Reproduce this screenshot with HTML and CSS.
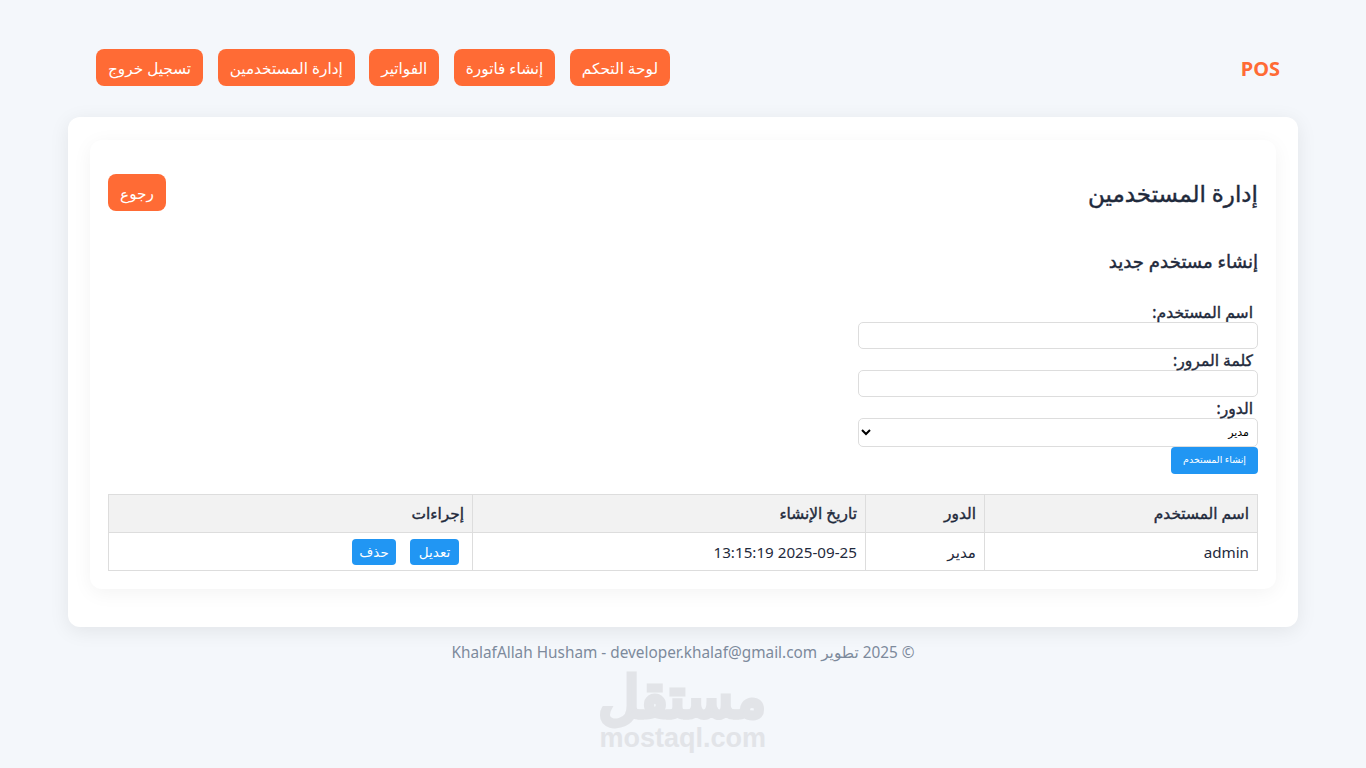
FILE: index.html
```html
<!DOCTYPE html>
<html lang="ar" dir="rtl">
<head>
    <meta charset="UTF-8">
    <meta name="viewport" content="width=device-width, initial-scale=1.0">
    <title>POS</title>
    <link rel="stylesheet" href="styles.css">
</head>
<body>

    <nav class="navbar">
        <div class="logo">POS</div>
        <div class="nav-links">
            <a class="btn" href="#">لوحة التحكم</a>
            <a class="btn" href="#">إنشاء فاتورة</a>
            <a class="btn" href="#">الفواتير</a>
            <a class="btn" href="#">إدارة المستخدمين</a>
            <a class="btn" href="#">تسجيل خروج</a>
        </div>
    </nav>

    <main class="container">
        <div class="card">
            <div class="card-header">
                <h2>إدارة المستخدمين</h2>
                <a class="btn" href="#">رجوع</a>
            </div>

            <h3>إنشاء مستخدم جديد</h3>

            <form class="user-form">
                <label>اسم المستخدم:</label>
                <input type="text">
                <label>كلمة المرور:</label>
                <input type="password">
                <label>الدور:</label>
                <select>
                    <option>مدير</option>
                </select>
                <button type="button" class="btn-small btn-submit">إنشاء المستخدم</button>
            </form>

            <table class="users-table">
                <thead>
                    <tr>
                        <th class="col-name">اسم المستخدم</th>
                        <th class="col-role">الدور</th>
                        <th class="col-date">تاريخ الإنشاء</th>
                        <th>إجراءات</th>
                    </tr>
                </thead>
                <tbody>
                    <tr>
                        <td>admin</td>
                        <td>مدير</td>
                        <td>2025-09-25 13:15:19</td>
                        <td>
                            <a class="btn-small btn-action btn-edit" href="#">تعديل</a>
                            <a class="btn-small btn-action btn-delete" href="#">حذف</a>
                        </td>
                    </tr>
                </tbody>
            </table>
        </div>
    </main>

    <footer class="footer">© 2025 تطوير KhalafAllah Husham - developer.khalaf@gmail.com</footer>

    <div class="watermark">
        <span class="wm-ar">مستقل</span>
        <span class="wm-en">mostaql.com</span>
    </div>

</body>
</html>
```

FILE: styles.css
```css
/* General */
body {
    font-family: "Noto Sans", "DejaVu Sans", sans-serif;
    background: #f4f7fb;
    color: #1f2a3c;
    margin: 0;
    height: 768px;
    overflow: hidden;
    position: relative;
}

/* Navbar */
.navbar {
    display: flex;
    justify-content: space-between;
    align-items: center;
    padding: 49px 86px 31px 96px;
}

.logo {
    color: #ff6b35;
    font-size: 20px;
    font-weight: 700;
    margin-top: 2px;
}

.nav-links {
    display: flex;
    gap: 14.5px;
}

.btn {
    display: block;
    background: #ff6b35;
    color: #fff;
    text-decoration: none;
    font-size: 15.3px;
    line-height: 38px;
    height: 37px;
    padding: 0 12px;
    border-radius: 8px;
}

/* Main */
.container {
    margin: 0 68px;
    padding: 23px 22px 38px;
    background: #fff;
    border-radius: 12px;
    box-shadow: 0 4px 20px rgba(0, 0, 0, 0.08);
}

.card {
    padding: 34px 18px 18px;
    border-radius: 12px;
    box-shadow: 0 4px 20px rgba(0, 0, 0, 0.05);
}

.card-header {
    display: flex;
    justify-content: space-between;
    align-items: flex-start;
    height: 56px;
}

h2 {
    font-size: 23px;
    font-weight: 400;
    -webkit-text-stroke: 0.4px;
    margin: 0;
    line-height: 38px;
}

h3 {
    font-size: 18.2px;
    font-weight: 400;
    -webkit-text-stroke: 0.4px;
    margin: 16px 0 0;
    line-height: 30px;
}

/* Form */
.user-form {
    width: 400px;
    margin-top: 25px;
    padding-bottom: 20px;
}

.user-form label {
    display: block;
    font-size: 15.6px;
    -webkit-text-stroke: 0.4px;
    line-height: 20px;
    padding: 1px 5px 0 0;
}

.user-form input,
.user-form select {
    display: block;
    width: 100%;
    box-sizing: border-box;
    height: 27px;
    background: #fff;
    border: 1px solid #ddd;
    border-radius: 5px;
    font-family: inherit;
    font-size: 11px;
}

.user-form select {
    height: 29px;
    padding: 0 4px 2px;
}

.btn-small {
    background: #2196f3;
    color: #fff;
    border: 0;
    border-radius: 4px;
    text-decoration: none;
    font-family: inherit;
}

.btn-submit {
    display: block;
    width: 87px;
    height: 27px;
    padding: 0 0 3px;
    font-size: 9.5px;
}

/* Table */
.users-table {
    width: 100%;
    table-layout: fixed;
    border-collapse: collapse;
    font-size: 15.2px;
}

.users-table th,
.users-table td {
    border: 1px solid #ddd;
    height: 38px;
    padding: 0 8px;
    text-align: right;
    box-sizing: border-box;
}

.users-table th {
    background: #f2f2f2;
    font-size: 15.4px;
    font-weight: 400;
    -webkit-text-stroke: 0.4px;
}

.col-name { width: 273px; }
.col-role { width: 119px; }
.col-date { width: 393px; }

.btn-action {
    display: inline-block;
    font-size: 13.5px;
    line-height: 26px;
    height: 26px;
    text-align: center;
    margin: 0 5px;
}

.btn-edit { width: 49px; }
.btn-delete { width: 44px; }

/* Footer */
.footer {
    text-align: center;
    color: #7d8a9c;
    font-size: 15.35px;
    margin-top: 15px;
}

/* Watermark */
.watermark {
    position: absolute;
    left: 600px;
    top: 668px;
    width: 166px;
    text-align: center;
    color: #e2e4e8;
    font-weight: 700;
    font-family: "Liberation Sans", "DejaVu Sans", sans-serif;
}

.wm-ar {
    display: block;
    font-family: "Noto Sans", "DejaVu Sans", sans-serif;
    font-weight: 400;
    font-size: 56px;
    line-height: 55px;
    -webkit-text-stroke: 5px #e2e4e8;
}

.wm-en {
    display: block;
    font-size: 27px;
    line-height: 30px;
}
```
